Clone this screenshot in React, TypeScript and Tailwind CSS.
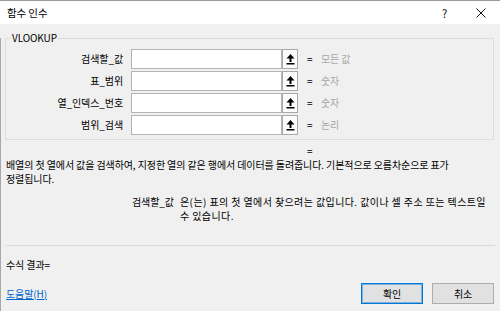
import React from "react";

const args = [
  { label: "검색할_값", hint: "모든 값" },
  { label: "표_범위", hint: "숫자" },
  { label: "열_인덱스_번호", hint: "숫자" },
  { label: "범위_검색", hint: "논리" },
];

function CollapseIcon() {
  return (
    <svg width="9" height="11" viewBox="0 0 9 11">
      <polygon points="4.5,0 8.5,4.5 0.5,4.5" fill="#000" />
      <rect x="3.5" y="4" width="2" height="4" fill="#000" />
      <rect x="0.5" y="9" width="8" height="1.5" fill="#000" />
    </svg>
  );
}

function ArgRow({ label, hint }: { label: string; hint: string }) {
  return (
    <div className="flex h-[20px] items-center">
      <span className="w-[117px] text-right">{label}</span>
      <div className="ml-[8px] h-[20px] w-[151px] border border-[#b4b4b4] bg-white"></div>
      <button className="flex h-[20px] w-[16px] items-center justify-center border border-[#a8a8a8] bg-[#fbfbfb]">
        <CollapseIcon />
      </button>
      <span className="ml-[9px] w-[6px]">=</span>
      <span className="ml-[8px] text-[#a6a6a6]">{hint}</span>
    </div>
  );
}

export default function App() {
  return (
    <div
      className="h-[311px] w-[500px] overflow-hidden bg-[#f0f0f0] text-[10px] leading-[14px] tracking-[-0.1px] text-black"
      style={{ fontFamily: '"Noto Sans CJK KR", "Noto Sans", sans-serif' }}
    >
      <div className="flex h-[24px] items-center border-t border-[#9c9c9c] bg-white pl-[7px]">
        <span className="text-[10.5px]">함수 인수</span>
        <span className="ml-auto mr-[29px] text-[11px]">?</span>
        <svg width="10" height="10" viewBox="0 0 10 10" className="mr-[14px]">
          <path d="M0.5 0.5 L9.5 9.5 M9.5 0.5 L0.5 9.5" stroke="#111" strokeWidth="1" />
        </svg>
      </div>
      <div className="h-[287px] border-l border-[#a8a8a8] pl-[4px]">
        <div className="relative mt-[14px] h-[102px] w-[489px] border border-[#dcdcdc] pt-[10px]">
          <span className="absolute left-[5px] top-[-8px] bg-[#f0f0f0] px-[1px]">VLOOKUP</span>
          <div className="flex flex-col gap-[2px]">
            {args.map((a) => (
              <ArgRow key={a.label} label={a.label} hint={a.hint} />
            ))}
          </div>
        </div>
        <div className="mt-[4px] h-[14px] pl-[302px]">=</div>
        <div className="pl-[1px]">
          <div className="whitespace-nowrap">
            배열의 첫 열에서 값을 검색하여, 지정한 열의 같은 행에서 데이터를 돌려줍니다. 기본적으로 오름차순으로 표가
          </div>
          <div className="whitespace-nowrap">정렬됩니다.</div>
        </div>
        <div className="mt-[9px] flex">
          <span className="ml-[127px] w-[48px] whitespace-nowrap">검색할_값</span>
          <div className="tracking-[0.4px]">
            <div className="whitespace-nowrap">
              은(는) 표의 첫 열에서 찾으려는 값입니다. 값이나 셀 주소 또는 텍스트일
            </div>
            <div className="whitespace-nowrap">수 있습니다.</div>
          </div>
        </div>
        <div className="ml-[1px] mt-[22px] h-px w-[489px] bg-[#d9d9d9]"></div>
        <div className="ml-[1px] mt-[12px]">수식 결과=</div>
        <div className="mt-[11px] flex items-center">
          <a className="ml-[1px] text-[#0066cc] underline">도움말(H)</a>
          <button className="ml-auto h-[21px] w-[62px] border border-[#0078d7] bg-[#e1e1e1] shadow-[inset_0_0_0_1px_rgba(0,120,215,0.45)]">
            확인
          </button>
          <button className="ml-[9px] mr-[6px] h-[21px] w-[62px] border border-[#adadad] bg-[#e1e1e1]">
            취소
          </button>
        </div>
      </div>
    </div>
  );
}
